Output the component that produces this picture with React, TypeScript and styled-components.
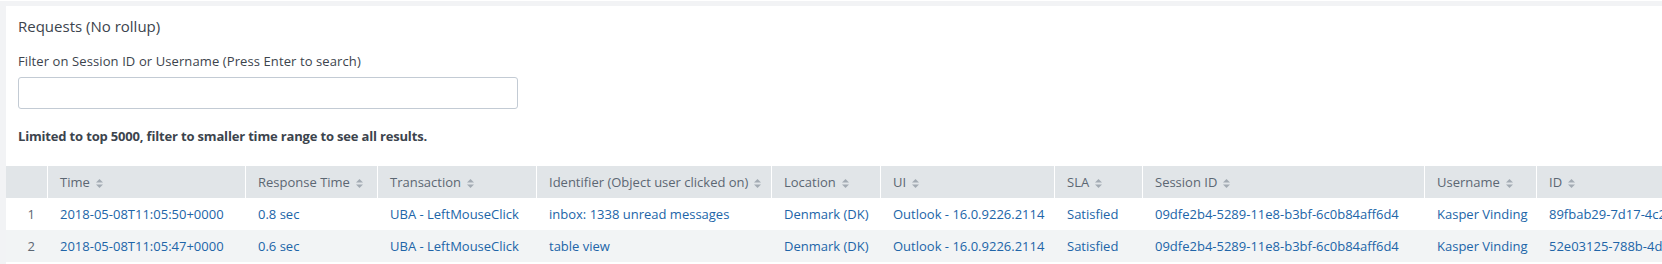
import React from "react";
import styled, { createGlobalStyle } from "styled-components";

const Global = createGlobalStyle`
  html, body { margin: 0; padding: 0; background: #fff; overflow: hidden; }
  body { font-family: "Open Sans", "Liberation Sans", sans-serif; }
`;

const Page = styled.div`
  width: 1662px;
  height: 264px;
  box-sizing: border-box;
  border-top: 1px solid #fff;
  background: #f2f3f5;
  padding: 5px 0 0 6px;
  overflow: hidden;
`;

const Panel = styled.section`
  background: #fff;
  height: 100%;
  padding-top: 10px;
  box-sizing: border-box;
  overflow: hidden;
`;

const Head = styled.div`
  padding: 0 12px;
`;

const Title = styled.h2`
  margin: 0;
  font-size: 15px;
  line-height: 20px;
  font-weight: 400;
  color: #3c444d;
`;

const Label = styled.label`
  display: block;
  margin-top: 16px;
  font-size: 13px;
  line-height: 18px;
  letter-spacing: 0.1px;
  color: #3c444d;
`;

const Input = styled.input`
  display: block;
  box-sizing: border-box;
  width: 500px;
  height: 32px;
  margin: 7px 0 0;
  border: 1px solid #c3cbd4;
  border-radius: 3px;
  background: #fff;
  padding: 0 8px;
  font: inherit;
  outline: none;
`;

const Notice = styled.p`
  margin: 18px 0 0;
  font-size: 13px;
  line-height: 18px;
  font-weight: 700;
  letter-spacing: -0.17px;
  color: #3c444d;
`;

const Table = styled.table<{ $width: number }>`
  margin-top: 21px;
  border-collapse: separate;
  border-spacing: 0;
  table-layout: fixed;
  width: ${(p) => p.$width}px;
  font-size: 13px;
`;

const Th = styled.th<{ $num?: boolean }>`
  height: 32px;
  box-sizing: border-box;
  padding: 0 12px;
  background: #e1e5e8;
  color: #5c6773;
  font-weight: 400;
  text-align: left;
  white-space: nowrap;
  border-left: ${(p) => (p.$num ? "0" : "1px solid #fff")};
`;

const Row = styled.tr<{ $alt?: boolean }>`
  background: ${(p) => (p.$alt ? "#f2f4f5" : "#fff")};
`;

const Td = styled.td<{ $num?: boolean }>`
  height: 32px;
  box-sizing: border-box;
  padding: 0 12px;
  white-space: nowrap;
  overflow: hidden;
  text-align: ${(p) => (p.$num ? "right" : "left")};
  color: ${(p) => (p.$num ? "#5c6773" : "#2165a8")};
  border-left: ${(p) => (p.$num ? "0" : "1px solid transparent")};
`;

const Link = styled.a`
  color: inherit;
  text-decoration: none;
`;

const SortIcon = styled.svg`
  margin-left: 6px;
  vertical-align: -1px;
`;

const Sort = () => (
  <SortIcon width="7" height="9" viewBox="0 0 7 9">
    <path d="M0 3.6 L3.5 0 L7 3.6 Z" fill="#a3abb3" />
    <path d="M0 5.4 L7 5.4 L3.5 9 Z" fill="#a3abb3" />
  </SortIcon>
);

const columns: { label: string; width: number }[] = [
  { label: "Time", width: 198 },
  { label: "Response Time", width: 132 },
  { label: "Transaction", width: 159 },
  { label: "Identifier (Object user clicked on)", width: 235 },
  { label: "Location", width: 109 },
  { label: "UI", width: 174 },
  { label: "SLA", width: 88 },
  { label: "Session ID", width: 282 },
  { label: "Username", width: 112 },
  { label: "ID", width: 300 },
];

const rows: string[][] = [
  [
    "2018-05-08T11:05:50+0000",
    "0.8 sec",
    "UBA - LeftMouseClick",
    "inbox: 1338 unread messages",
    "Denmark (DK)",
    "Outlook - 16.0.9226.2114",
    "Satisfied",
    "09dfe2b4-5289-11e8-b3bf-6c0b84aff6d4",
    "Kasper Vinding",
    "89fbab29-7d17-4c2a-9e1b-3f6d2a81c0e7",
  ],
  [
    "2018-05-08T11:05:47+0000",
    "0.6 sec",
    "UBA - LeftMouseClick",
    "table view",
    "Denmark (DK)",
    "Outlook - 16.0.9226.2114",
    "Satisfied",
    "09dfe2b4-5289-11e8-b3bf-6c0b84aff6d4",
    "Kasper Vinding",
    "52e03125-788b-4d1f-a2c6-8b7e90f1d354",
  ],
];

const NUM_WIDTH = 41;
const totalWidth = NUM_WIDTH + columns.reduce((s, c) => s + c.width, 0);

export default function App() {
  return (
    <>
      <Global />
      <Page>
        <Panel>
          <Head>
            <Title>Requests (No rollup)</Title>
            <Label htmlFor="filter">Filter on Session ID or Username (Press Enter to search)</Label>
            <Input id="filter" type="text" />
            <Notice>Limited to top 5000, filter to smaller time range to see all results.</Notice>
          </Head>
          <Table $width={totalWidth}>
            <colgroup>
              <col style={{ width: NUM_WIDTH }} />
              {columns.map((c) => (
                <col key={c.label} style={{ width: c.width }} />
              ))}
            </colgroup>
            <thead>
              <tr>
                <Th $num />
                {columns.map((c) => (
                  <Th key={c.label}>
                    {c.label}
                    <Sort />
                  </Th>
                ))}
              </tr>
            </thead>
            <tbody>
              {rows.map((r, i) => (
                <Row key={i} $alt={i % 2 === 1}>
                  <Td $num>{i + 1}</Td>
                  {r.map((v, j) => (
                    <Td key={j}>
                      <Link href="#">{v}</Link>
                    </Td>
                  ))}
                </Row>
              ))}
            </tbody>
          </Table>
        </Panel>
      </Page>
    </>
  );
}
